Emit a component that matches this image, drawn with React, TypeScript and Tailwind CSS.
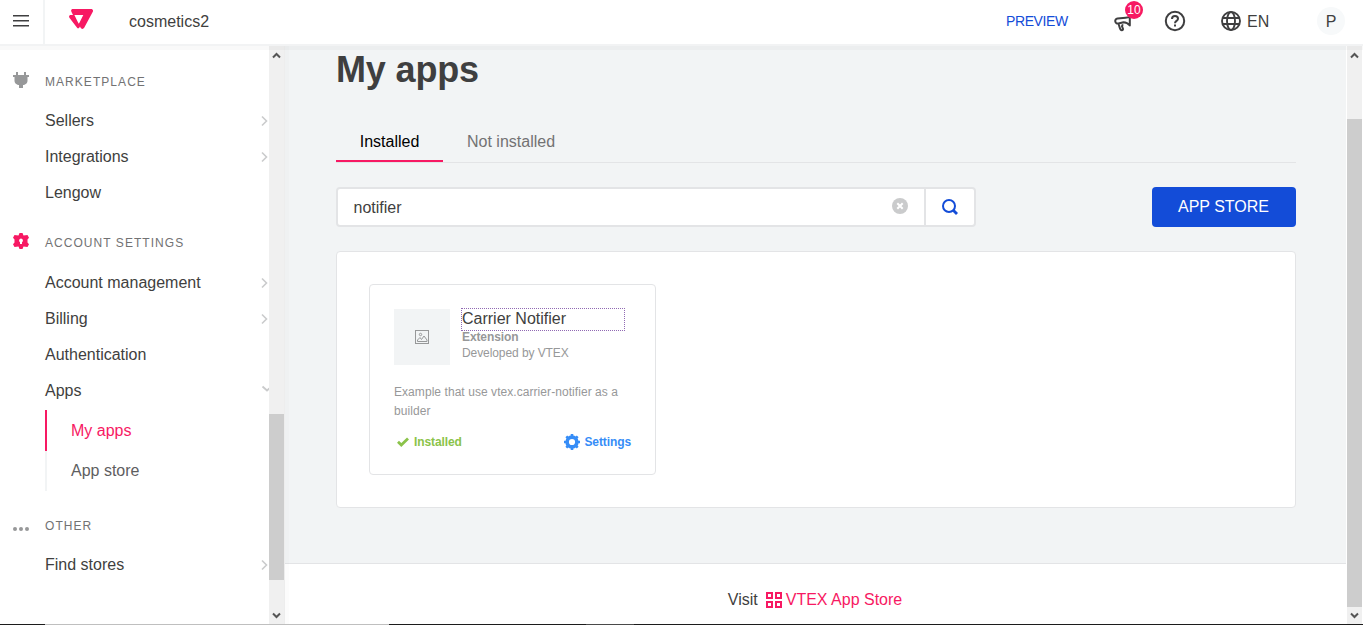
import type { ReactNode } from "react";

function ChevronRight() {
  return (
    <svg width="8" height="12" viewBox="0 0 8 12" fill="none" stroke="#cacbcc" strokeWidth="1.6">
      <path d="M1 1.500L5.500 6L1 10.500" />
    </svg>
  );
}

function PlugIcon() {
  return (
    <svg width="16" height="16" viewBox="0 0 16 16" fill="#979899">
      <path d="M3 0h2v3h6V0h2v3h3v2h-1.500v4c0 1.800-1.500 3.300-3.500 4h-1v3H6v-3H5C3 12.300 1.500 10.800 1.500 9V5H0V3h3z" />
    </svg>
  );
}

function LockGearIcon() {
  return (
    <svg width="16" height="16" viewBox="0 0 16 16" fill="#f71963" fillRule="evenodd">
      <path d="M6.500 0h3L10.500 2.500 14.500 2 16 4.700 14.500 6.500v3L16 11.300 14.500 14l-4-.5L9.500 16h-3l-1-2.500-4 .5L0 11.300 1.500 9.500v-3L0 4.700 1.500 2l4 .5zM8 5.500a2 2 0 0 0-1 3.700V11h2V9.200a2 2 0 0 0-1-3.700z" />
    </svg>
  );
}

function DotsIcon() {
  return (
    <svg width="16" height="16" viewBox="0 0 16 16" fill="#979899">
      <circle cx="2" cy="13" r="2" />
      <circle cx="8" cy="13" r="2" />
      <circle cx="14" cy="13" r="2" />
    </svg>
  );
}

function Section({ icon, title }: { icon: ReactNode; title: string }) {
  return (
    <div className="flex h-4 items-center">
      <span className="ml-[13px] w-8 shrink-0">{icon}</span>
      <span className="pt-[3px] text-[12px] leading-4 tracking-[1.05px] whitespace-nowrap text-[#727273]">{title}</span>
    </div>
  );
}

function Item({ label, arrow }: { label: string; arrow?: boolean }) {
  return (
    <div className="flex h-9 items-center justify-between pl-[45px]">
      <span>{label}</span>
      {arrow && <ChevronRight />}
    </div>
  );
}

function Arrow({ up }: { up?: boolean }) {
  return (
    <svg width="9" height="7" viewBox="0 0 9 7" fill="none" stroke="#555" strokeWidth="2">
      <path d={up ? "M1 5.500L4.500 2L8 5.500" : "M1 1.500L4.500 5L8 1.500"} />
    </svg>
  );
}

export default function App() {
  return (
    <div className="flex h-[625px] w-[1363px] flex-col overflow-hidden bg-white font-['Liberation_Sans',Arial,sans-serif] text-[16px] leading-5 text-[#3f3f40]">
      <header className="flex h-[46px] shrink-0 items-stretch border-b-2 border-[#f2f3f4]">
        <div className="flex w-[45px] shrink-0 items-center border-r-2 border-[#f2f4f5] pl-[13px]">
          <svg width="16" height="14" viewBox="0 0 16 14" fill="#3f3f40" className="mt-[-3px]">
            <rect y="1" width="16" height="1.500" />
            <rect y="6" width="16" height="1.500" />
            <rect y="11" width="16" height="1.500" />
          </svg>
        </div>
        <svg width="24" height="21" viewBox="0 0 24 21" fill="#f71963" fillRule="evenodd" className="mt-[9px] ml-6 shrink-0">
          <path d="M3.800 0H22c1.600 0 2.500 1.400 1.800 2.800L15.200 18.800c-.8 1.500-2.900 1.500-3.600 0L11 17.500l-.6.900c-.7 1.200-1.900 1.200-2.500 0L.4 8.800C-.4 7.300.3 6 1.800 6H4L2.400 2.700C1.700 1.200 2.400 0 3.800 0zM5.400 6.100l3.400 7 1 1.600 1-1.600L14.300 6.100z" />
        </svg>
        <span className="ml-9 self-center pb-[1px]">cosmetics2</span>
        <div className="ml-auto flex items-center">
          <span className="w-[108px] pb-[2px] text-[14px] tracking-[-0.4px] text-[#134cd8]">PREVIEW</span>
          <div className="relative h-6 w-[50px]">
            <svg width="18" height="20" viewBox="0 0 18 20" fill="none" stroke="#3f3f40" strokeWidth="2" strokeLinejoin="round" className="mt-[3px]">
              <path d="M15.800 4v8.500C14 10.200 12 9.200 9.500 9.200L4.500 10.500C2.800 10.900 1.600 10 1.300 8.500S1.800 5.800 3.500 5.500L9 5c2.500 0 4.500-.5 6.800-1zM4.500 10.500l1 3.500c.6 2.200 1 3.200 2.200 3.200 1.300 0 1.600-1 1.100-2L8 13.300c0-.8.900-1.300 1.300-1.300" />
            </svg>
            <span className="absolute top-[-9px] left-[11px] flex size-[18px] items-center justify-center rounded-full bg-[#f71963] text-[12px] leading-none text-white">10</span>
          </div>
          <svg width="22" height="22" viewBox="0 0 22 22" fill="none" stroke="#3f3f40" strokeWidth="2" className="mt-[-2px]">
            <circle cx="11" cy="11" r="9.200" />
            <path d="M8 9C8 7 9.300 6 11 6s3 1.200 3 2.700c0 2.100-3 2.300-3 4.500M11 14.500v2" />
          </svg>
          <svg width="22" height="22" viewBox="0 0 22 22" fill="none" stroke="#3f3f40" strokeWidth="1.900" className="mt-[-2px] ml-[34px]">
            <circle cx="11" cy="11" r="9" />
            <ellipse cx="11" cy="11" rx="4" ry="9" />
            <path d="M2.500 8h17M2.500 14h17" />
          </svg>
          <span className="ml-[5px] w-[70px] pb-px">EN</span>
          <span className="mr-[18px] mt-[-2px] flex size-7 items-center justify-center rounded-full bg-[#f7f9fa] pt-px">P</span>
        </div>
      </header>

      <div className="relative flex h-[578px] shrink-0">
        <div className="pointer-events-none absolute inset-x-0 top-0 z-10 h-1 bg-black/[0.022]" />
        <aside className="flex w-[285px] shrink-0 border-r border-[#ededed]">
          <nav className="w-[269px] shrink-0 overflow-hidden pt-[26px]">
            <Section icon={<PlugIcon />} title="MARKETPLACE" />
            <div className="pt-[15px]">
              <Item label="Sellers" arrow />
              <Item label="Integrations" arrow />
              <Item label="Lengow" />
            </div>
            <div className="pt-[22px]">
              <Section icon={<LockGearIcon />} title="ACCOUNT SETTINGS" />
            </div>
            <div className="pt-4">
              <Item label="Account management" arrow />
              <Item label="Billing" arrow />
              <Item label="Authentication" />
              <div className="flex h-9 items-center justify-between pl-[45px]">
                <span>Apps</span>
                <svg width="8" height="8" viewBox="0 0 8 8" fill="none" stroke="#cacbcc" strokeWidth="1.800" className="mb-[5px]">
                  <path d="M1.500 1.500L6 5.500L10.500 1.500" />
                </svg>
              </div>
            </div>
            <div className="mt-[1px] ml-[45px]">
              <div className="flex h-[41px] items-center border-l-2 border-[#f71963] pl-6 text-[#f71963]">My apps</div>
              <div className="flex h-10 items-center border-l-2 border-[#f2f4f5] pl-6 text-[#5e5e5f]">App store</div>
            </div>
            <div className="pt-[25px]">
              <Section icon={<DotsIcon />} title="OTHER" />
            </div>
            <div className="pt-[15px]">
              <Item label="Find stores" arrow />
            </div>
          </nav>
          <div className="flex w-[15px] shrink-0 flex-col items-center bg-[#f0f0f0]">
            <div className="flex h-[17px] items-center pt-[2px]"><Arrow up /></div>
            <div className="mt-[351px] h-[166px] w-[15px] bg-[#cdcdcd]" />
            <div className="mt-auto flex h-[17px] items-center"><Arrow /></div>
          </div>
        </aside>

        <main className="relative flex w-[1061px] shrink-0 flex-col bg-[#f2f4f5]">
          <div className="pointer-events-none absolute inset-y-0 left-0 w-1 bg-black/[0.012]" />
          <div className="pl-[51px]">
            <h1 className="pt-1 text-[36px] leading-10 font-bold tracking-[-0.15px]">My apps</h1>
            <div className="mt-[31px] flex h-[42px] w-[960px] border-b border-[#e3e4e6]">
              <div className="flex w-[107px] items-center justify-center border-b-2 border-[#f71963] pt-[2px] text-black">Installed</div>
              <div className="flex items-center px-6 text-[#727273]">Not installed</div>
            </div>
            <div className="mt-6 flex h-10 w-[960px] justify-between">
              <div className="flex w-[640px] overflow-hidden rounded border-2 border-[#e3e4e6] bg-white">
                <div className="flex flex-1 items-center justify-between pr-4 pl-[15.5px]">
                  <span className="pt-px">notifier</span>
                  <svg width="16" height="16" viewBox="0 0 16 16" className="mb-[2px]">
                    <circle cx="8" cy="8" r="8" fill="#cacbcc" />
                    <path d="M5.300 5.300l5.400 5.400M10.700 5.300l-5.400 5.400" stroke="#fff" strokeWidth="2" />
                  </svg>
                </div>
                <div className="flex w-[50px] items-center justify-center border-l-2 border-[#e3e4e6]">
                  <svg width="16" height="16" viewBox="0 0 16 16" fill="none" stroke="#134cd8" strokeWidth="2">
                    <circle cx="7" cy="7" r="6" />
                    <path d="M11 11L15 15" strokeWidth="2.800" />
                  </svg>
                </div>
              </div>
              <div className="flex w-36 items-center justify-center rounded bg-[#134cd8] pr-px text-white">
                <span className="pb-px">APP STORE</span>
              </div>
            </div>
            <section className="mt-6 h-[257px] w-[960px] rounded border border-[#e3e4e6] bg-white p-8">
              <article className="h-[191px] w-[287px] rounded border border-[#e3e4e6] pt-6 pr-6 pl-6 text-[12px] leading-4 text-[#979899]">
                <div className="flex">
                  <div className="flex size-14 shrink-0 items-center justify-center bg-[#f2f4f5]">
                    <svg width="14" height="14" viewBox="0 0 14 14" fill="none" stroke="#979899">
                      <rect x=".5" y=".5" width="13" height="13" />
                      <circle cx="5.500" cy="4.500" r="1.200" />
                      <path d="M2.500 11.500V10L5 7.500l1.500 2L9 6l3 4v1.500z" />
                    </svg>
                  </div>
                  <div className="mt-[-1px] ml-[11px] w-[164px]">
                    <div className="h-[23px] border border-dotted border-[#551a8b]/65 text-[16px] leading-[19px] text-[#3f3f40]">Carrier Notifier</div>
                    <div className="mt-[-2px] pl-px font-bold tracking-[-0.1px]">Extension</div>
                    <div className="pl-px tracking-[-0.08px]">Developed by VTEX</div>
                  </div>
                </div>
                <p className="mt-[18px] w-[237px] leading-[19px] tracking-[0.06px]">Example that use vtex.carrier-notifier as a<br />builder</p>
                <div className="mt-[13px] flex h-4 items-center justify-between font-bold tracking-[-0.1px]">
                  <span className="flex items-center gap-[5px] pl-[3px] text-[#8bc34a]">
                    <svg width="12" height="10" viewBox="0 0 12 10" fill="none" stroke="#8bc34a" strokeWidth="2.800">
                      <path d="M1 4.800L4.300 8L11 1.500" />
                    </svg>
                    Installed
                  </span>
                  <span className="flex items-center gap-[4px] text-[#368df7]">
                    <svg width="16" height="16" viewBox="0 0 16 16" fill="none" stroke="#368df7">
                      <circle cx="8" cy="8" r="4.900" strokeWidth="3.600" />
                      <path d="M8 0v3M8 13v3M0 8h3M13 8h3M2.300 2.300l2 2M11.700 11.700l2 2M13.700 2.300l-2 2M4.300 11.700l-2 2" strokeWidth="2.600" />
                    </svg>
                    Settings
                  </span>
                </div>
              </article>
            </section>
          </div>
          <footer className="mt-auto flex h-[61px] items-center justify-center border-t border-[#e3e4e6] bg-white pt-[12px] pr-px">
            <span className="mr-2">Visit</span>
            <svg width="16" height="16" viewBox="0 0 16 16" fill="none" stroke="#f71963" strokeWidth="2" className="mr-1">
              <rect x="1" y="1" width="5" height="5" />
              <rect x="10" y="1" width="5" height="5" />
              <rect x="1" y="10" width="5" height="5" />
              <rect x="10" y="10" width="5" height="5" />
            </svg>
            <span className="text-[#f71963]">VTEX App Store</span>
          </footer>
        </main>
        <div className="flex w-[17px] shrink-0 flex-col items-center border-x border-white bg-[#f0f0f0]">
          <div className="flex h-[17px] items-center pt-[2px]"><Arrow up /></div>
          <div className="mt-[56px] h-[488px] w-[15px] bg-[#cdcdcd]" />
          <div className="mt-auto flex h-[17px] items-center"><Arrow /></div>
        </div>
      </div>
      <div className="flex h-px shrink-0 bg-[#1c1c1c]">
        <div className="ml-[45px] w-[344px] bg-[#bfbfbf]" />
        <div className="ml-[197px] w-[48px] bg-[#4a4a4a]" />
      </div>
    </div>
  );
}
